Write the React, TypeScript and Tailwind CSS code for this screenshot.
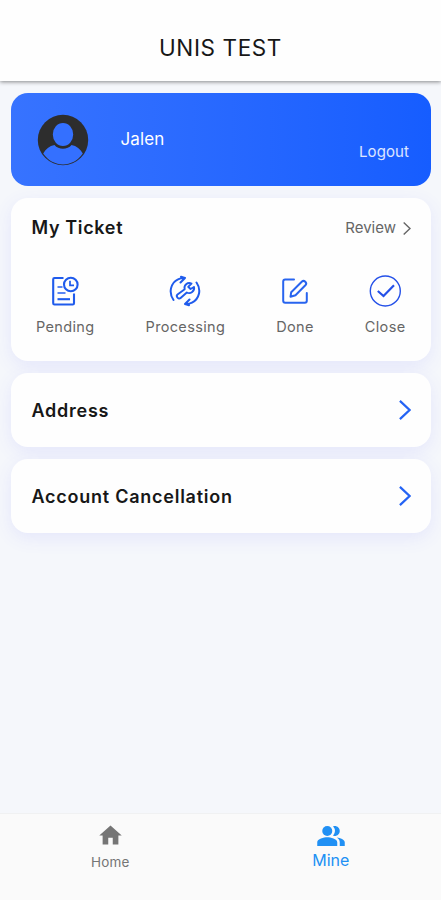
import React, { useState } from "react";
import type { ReactNode } from "react";
import { MdHome, MdPeopleAlt } from "react-icons/md";

type IconProps = { className?: string };

const PendingIcon = () => (
  <svg
    className="size-8"
    viewBox="0 0 32 32"
    fill="none"
    stroke="#1f5bec"
    strokeWidth="2.1">
    <path d="M14.500 3H5.500Q4.200 3 4.200 4.300V28.200Q4.200 29.500 5.500 29.500H23.700Q25 29.500 25 28.200V18.500" />
    <path d="M8.500 12H13.500M8.500 18H16.500" stroke="#5a86f4" />
    <path d="M8.500 24.200H21" />
    <circle cx="21.800" cy="9.500" r="6.800" />
    <path d="M21 5.800V10.300H25" strokeWidth="1.700" />
  </svg>
);

const ProcessingIcon = () => (
  <svg
    className="size-8"
    viewBox="0 0 32 32"
    fill="none"
    stroke="#1f5bec"
    strokeWidth="2"
    strokeLinecap="round"
    strokeLinejoin="round">
    <path d="M4.500 25C-.5 18 1.300 8 9 4.300Q12 2.600 16 3L12 1.800M16 3L11.500 7.500" />
    <path d="M27.500 7.500C32.500 14.500 30.500 24 23 27.700Q20 29.300 16 29L20 30.300M16 29L20.500 24.500" />
    <path
      d="M22.500 8.500C18.500 6.700 14.500 10.200 15.700 14.300L8.500 19.500C6.500 21.200 9.500 25 11.600 23L17.800 17.500C21.500 19.500 26 16 25 12L21.500 14L19.200 11.800Z"
      strokeWidth="1.900"
    />
  </svg>
);

const DoneIcon = () => (
  <svg
    className="size-8"
    viewBox="0 0 32 32"
    fill="none"
    stroke="#2864ef"
    strokeWidth="2"
    strokeLinecap="round"
    strokeLinejoin="round">
    <path d="M15 4.500H6.200Q4.200 4.500 4.200 6.500V25.700Q4.200 27.700 6.200 27.700H25.800Q27.800 27.700 27.800 25.700V18" />
    <path d="M23 6.500Q24.500 5.100 26.300 6.700Q28 8.500 26.600 10L16.500 20.200L11.500 21.800L12.200 17.200Z" />
  </svg>
);

const CloseIcon = () => (
  <svg
    className="size-8"
    viewBox="0 0 32 32"
    fill="none"
    stroke="#2450e8">
    <circle cx="16.300" cy="16" r="15" strokeWidth="1.400" />
    <path d="M8.800 16L14.500 21L25 10.200" strokeWidth="2.200" />
  </svg>
);

const Avatar = ({ className }: IconProps) => (
  <svg className={className} viewBox="0 0 52 52">
    <circle cx="26" cy="26" r="25.200" fill="#2d2d2d" />
    <path
      d="M6.200 39.500C8.500 35 12.500 32 17.500 31C21.500 36 30.500 36 34.500 31C39.500 32 43.500 35 45.800 39.500C36 54 16 54 6.200 39.500Z"
      fill="#3470ff"
    />
    <ellipse
      cx="26"
      cy="20.500"
      rx="11.200"
      ry="12.500"
      fill="#3470ff"
      stroke="#2d2d2d"
      strokeWidth="2"
    />
  </svg>
);

const Chevron = ({ className }: IconProps) => (
  <svg className={className} viewBox="0 0 12 20" fill="none" stroke="currentColor">
    <path d="M.9 .9L10.600 10L.9 19.100" strokeWidth="2.200" />
  </svg>
);

const statuses = [
  { label: "Pending", icon: <PendingIcon /> },
  { label: "Processing", icon: <ProcessingIcon /> },
  { label: "Done", icon: <DoneIcon /> },
  { label: "Close", icon: <CloseIcon /> },
];

const Card = ({ children, className }: { children: ReactNode; className: string }) => (
  <section
    className={`rounded-[17px] bg-[#fefefe] shadow-[0_5px_18px_rgba(85,90,255,0.10)] ${className}`}>
    {children}
  </section>
);

const MenuRow = ({ label }: { label: string }) => (
  <Card className="h-[74px]">
    <button className="flex h-full w-full items-center justify-between pr-5 pl-[20.500px] text-[18px] font-semibold tracking-[0.75px]">
      {label}
      <Chevron className="h-5 w-3 text-[#2463f4]" />
    </button>
  </Card>
);

export default function App() {
  const [tab, setTab] = useState("mine");

  return (
    <div className="flex h-[900px] w-[441px] flex-col overflow-hidden bg-[#f5f7fb] font-['Inter','Liberation_Sans',sans-serif] text-[#171717]">
      <header className="z-10 flex h-[81px] shrink-0 items-end justify-center bg-[#fefefe] pb-[17px] shadow-[0_1px_4px_rgba(0,0,0,0.45)]">
        <h1 className="text-[22.500px] leading-8 tracking-[0.6px]">UNIS TEST</h1>
      </header>

      <main className="flex flex-1 flex-col gap-3 pt-3 pr-2.5 pl-[11px]">
        <section className="flex h-[93px] shrink-0 items-center rounded-[17px] bg-linear-to-r from-[#3773ff] to-[#165dff] pr-[22px] pl-[26px] text-white">
          <Avatar className="size-[52px]" />
          <span className="ml-[31.500px] text-[17px] tracking-[0.1px]">Jalen</span>
          <button className="mt-[26px] ml-auto text-[15px] tracking-[0.1px] text-white/85">
            Logout
          </button>
        </section>

        <Card className="h-[163px]">
          <div className="flex h-[60px] items-center justify-between pr-5 pl-[20.500px]">
            <h2 className="-mt-px text-[18px] font-semibold tracking-[0.65px]">
              My Ticket
            </h2>
            <button className="flex items-center gap-[7px] text-[15px] text-[#666]">
              Review
              <Chevron className="h-[13px] w-2" />
            </button>
          </div>
          <div className="flex justify-between pt-[17px] pr-[25.500px] pl-[25px]">
            {statuses.map((status) => (
              <button
                key={status.label}
                className="flex flex-col items-center gap-[9px] text-[14.500px] leading-[22px] tracking-[0.35px] text-[#666]">
                {status.icon}
                {status.label}
              </button>
            ))}
          </div>
        </Card>
        <MenuRow label="Address" />
        <MenuRow label="Account Cancellation" />
      </main>

      <nav className="grid h-[87px] shrink-0 grid-cols-2 border-t border-[#f0f1f2] bg-[#fafafa]">
        <button
          onClick={() => setTab("home")}
          className={`flex flex-col items-center pt-2 ${tab === "home" ? "text-[#2090f4]" : "text-[#757575]"}`}>
          <MdHome className="size-[27px]" />
          <span className="mt-[3px] text-[13.500px] leading-5 tracking-[0.2px]">Home</span>
        </button>
        <button
          onClick={() => setTab("mine")}
          className={`flex flex-col items-center pt-[7px] ${tab === "mine" ? "text-[#2090f4]" : "text-[#757575]"}`}>
          <MdPeopleAlt className="size-[30px]" />
          <span className="-mt-px text-[16px] leading-5">Mine</span>
        </button>
      </nav>
    </div>
  );
}
